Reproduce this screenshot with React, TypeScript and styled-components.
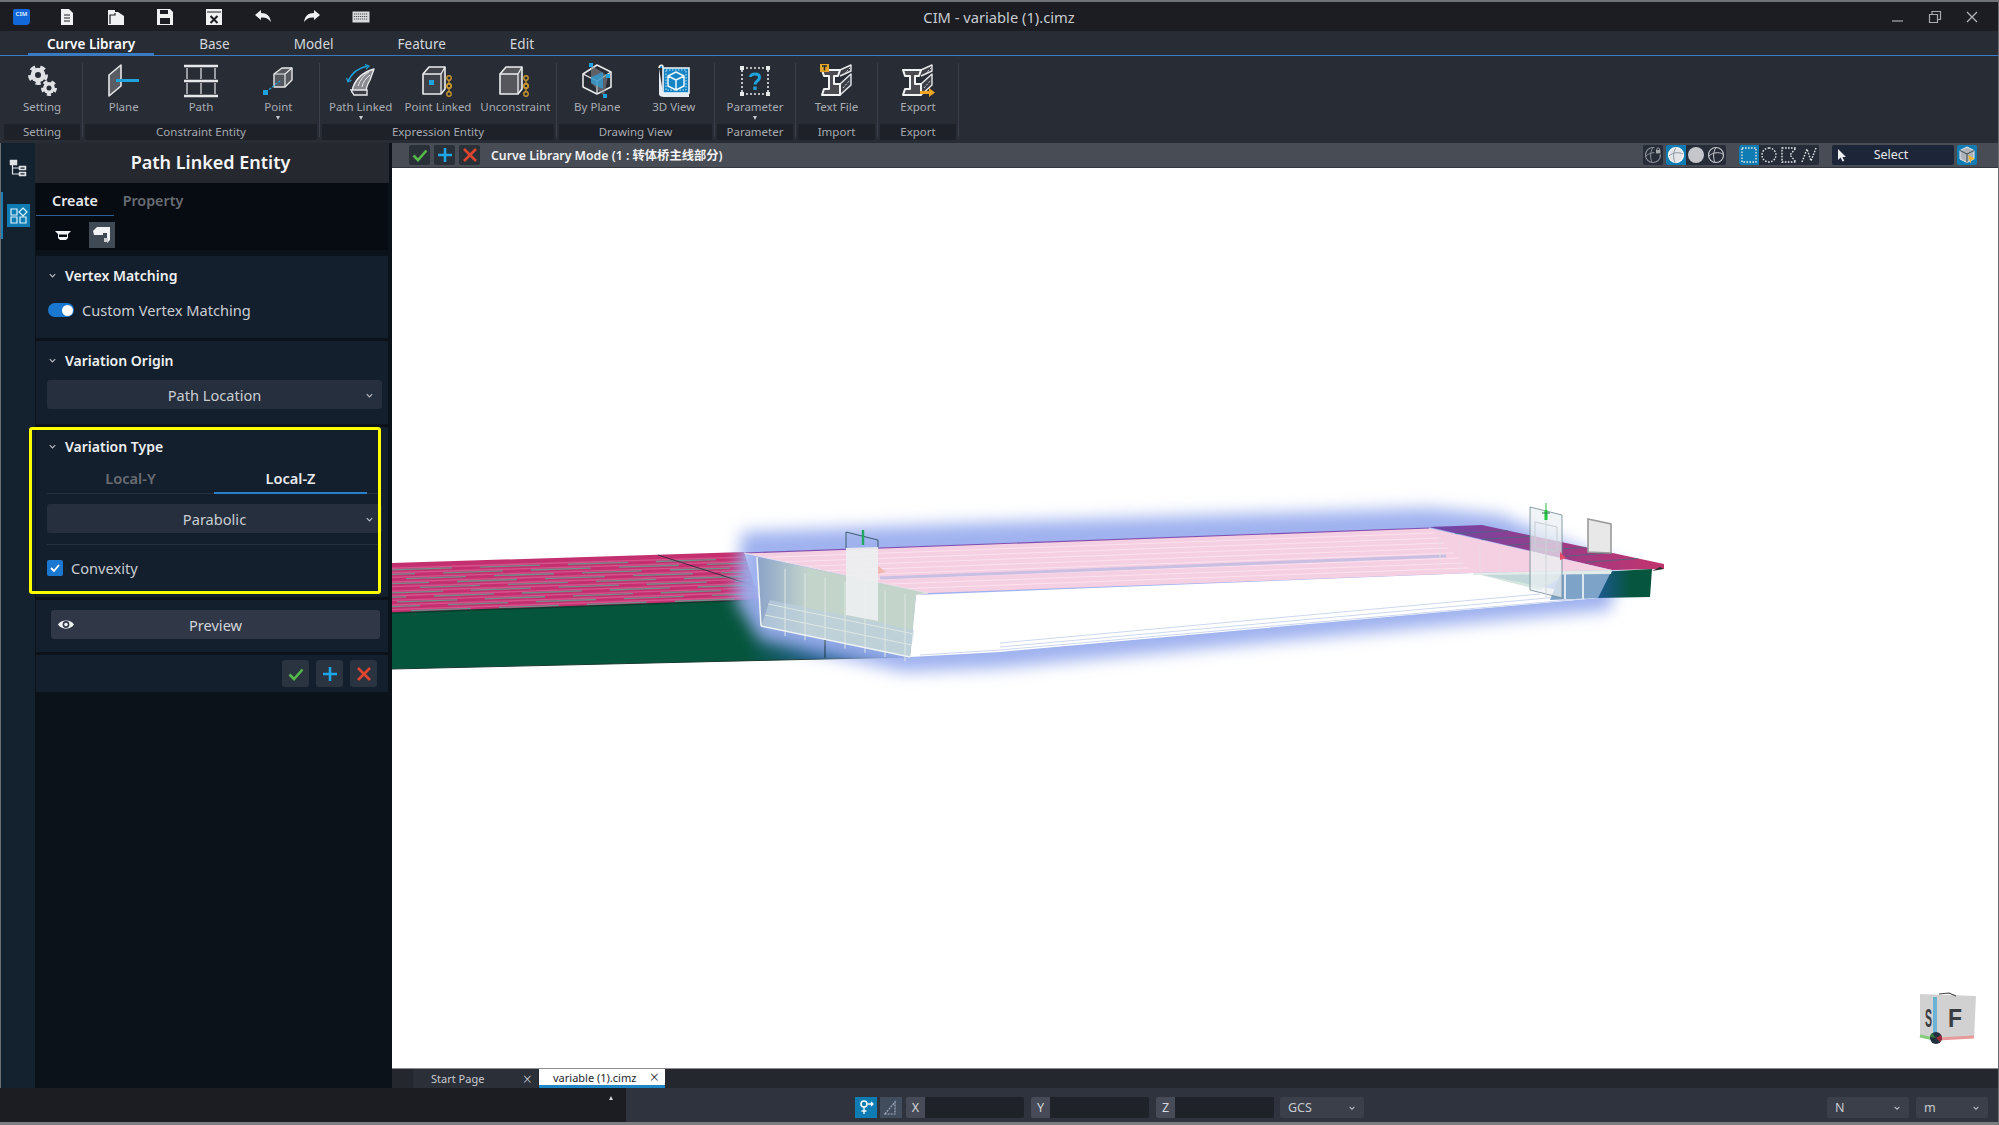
import React from "react";
import styled, { createGlobalStyle } from "styled-components";

const GlobalStyle = createGlobalStyle`
  html, body {
    margin: 0;
    padding: 0;
    background: #14202d;
  }
  body {
    font-family: "Noto Sans", "Noto Sans CJK SC", sans-serif;
  }
`;

const Frame = styled.div`
  width: 1999px;
  height: 1125px;
  box-sizing: border-box;
  overflow: hidden;
  display: flex;
  flex-direction: column;
  border-right: 1px solid #6a6d72;
  color: #fff;
`;

/* ---------- title bar ---------- */
const TitleBar = styled.div`
  height: 31px;
  box-sizing: border-box;
  border-top: 2px solid #6f7276;
  background: #1b1d22;
  display: grid;
  grid-template-columns: 1fr auto 1fr;
  align-items: center;
`;

const QuickBar = styled.div`
  display: flex;
  align-items: center;
  padding-left: 13px;
`;

const Logo = styled.div`
  width: 17px;
  height: 16px;
  margin-right: 12px;
  background: #1268d8;
  border-radius: 2px 2px 4px 2px;
  color: #cfe6ff;
  font-size: 6px;
  font-weight: 700;
  line-height: 10px;
  text-align: center;
`;

const QuickButton = styled.div`
  width: 49px;
  height: 20px;
  display: flex;
  align-items: center;
  justify-content: center;
`;

const WindowTitle = styled.div`
  font-size: 14.7px;
  color: #c9ccd1;
`;

const WindowButtons = styled.div`
  display: flex;
  justify-content: flex-end;
  gap: 23px;
  padding-right: 19px;
`;

/* ---------- menu + ribbon ---------- */
const MenuBar = styled.div`
  height: 25px;
  box-sizing: border-box;
  background: #282c35;
  border-bottom: 1px solid #3a7cc4;
  display: flex;
  padding-left: 28px;
  gap: 26px;
`;

const MenuTab = styled.div<{ $active?: boolean }>`
  height: 24px;
  line-height: 27px;
  box-sizing: border-box;
  padding: 0 19px;
  font-size: 13.5px;
  font-weight: ${(p) => (p.$active ? 600 : 400)};
  color: ${(p) => (p.$active ? "#ffffff" : "#d5d8dc")};
  border-bottom: ${(p) => (p.$active ? "2px solid #3a7cc4" : "none")};
`;

const Ribbon = styled.div`
  height: 87px;
  box-sizing: border-box;
  background: #282c35;
  display: flex;
  padding: 0 0 3px 4px;
`;

const RibbonGroup = styled.div<{ $width: number }>`
  width: ${(p) => p.$width}px;
  display: flex;
  flex-direction: column;
`;

const GroupItems = styled.div`
  height: 68px;
  display: flex;
`;

const GroupLabel = styled.div`
  height: 16px;
  background: #1e2127;
  color: #a6aab1;
  font-size: 11.5px;
  line-height: 16px;
  text-align: center;
`;

const GroupDivider = styled.div`
  width: 1px;
  height: 74px;
  margin: 7px 2px 0;
  background: #3b3f49;
`;

const RibbonItem = styled.div`
  flex: 1;
  min-width: 0;
  display: flex;
  flex-direction: column;
  align-items: center;
  padding-top: 7px;
`;

const ItemLabel = styled.div`
  font-size: 11.5px;
  line-height: 15px;
  color: #a9adb4;
  white-space: nowrap;
`;

const ItemCaret = styled.div`
  width: 0;
  height: 0;
  border-left: 2.5px solid transparent;
  border-right: 2.5px solid transparent;
  border-top: 4px solid #c8ccd0;
  margin-top: 2px;
`;

/* ---------- main area ---------- */
const Main = styled.div`
  flex: 1;
  min-height: 0;
  display: flex;
`;

const SideRail = styled.div`
  width: 35px;
  box-sizing: border-box;
  border-left: 1px solid #6a6d72;
  background: #14212e;
  position: relative;
  display: flex;
  flex-direction: column;
  align-items: center;
  padding-top: 13px;
  gap: 25px;
`;

const RailMarker = styled.div`
  position: absolute;
  left: 0;
  top: 49px;
  width: 2px;
  height: 47px;
  background: #1d7fb8;
`;

const RailButton = styled.div<{ $active?: boolean }>`
  width: 23px;
  height: 23px;
  display: flex;
  align-items: center;
  justify-content: center;
  background: ${(p) => (p.$active ? "#0f7cb3" : "transparent")};
`;

const Panel = styled.div`
  width: 357px;
  box-sizing: border-box;
  background: #0c1219;
  padding: 0 4px 0 1px;
  display: flex;
  flex-direction: column;
`;

const PanelTitle = styled.div`
  height: 40px;
  margin: 0 -1px;
  background: #25282f;
  font-size: 18px;
  font-weight: 600;
  line-height: 38px;
  text-align: center;
  color: #f4f5f6;
  padding-right: 3px;
`;

const CreateArea = styled.div`
  height: 67px;
  background: #060c12;
`;

const PanelTabs = styled.div`
  height: 33px;
  display: flex;
`;

const PanelTab = styled.div<{ $active?: boolean }>`
  width: 78px;
  height: 33px;
  box-sizing: border-box;
  font-size: 14.3px;
  font-weight: 600;
  line-height: 35px;
  text-align: center;
  color: ${(p) => (p.$active ? "#e8eaec" : "#696d73")};
  border-bottom: ${(p) => (p.$active ? "1.5px solid #2c5f93" : "none")};
`;

const ModeRow = styled.div`
  display: flex;
  align-items: center;
  gap: 13px;
  padding: 6px 0 0 14px;
`;

const ModeButton = styled.div<{ $active?: boolean }>`
  width: 26px;
  height: 26px;
  display: flex;
  align-items: center;
  justify-content: center;
  background: ${(p) => (p.$active ? "#3f4a55" : "transparent")};
`;

const Sections = styled.div`
  display: flex;
  flex-direction: column;
  gap: 3px;
  padding-top: 6px;
`;

const Section = styled.div<{ $height: number }>`
  position: relative;
  height: ${(p) => p.$height}px;
  box-sizing: border-box;
  background: #141f2d;
  padding: 0 6px 0 11px;
`;

const SectionHead = styled.div`
  height: 38px;
  display: flex;
  align-items: center;
  gap: 8px;
  padding-left: 1px;
  font-size: 14px;
  font-weight: 600;
  color: #eef0f2;
`;

const ToggleRow = styled.div`
  display: flex;
  align-items: center;
  gap: 8px;
  padding: 6px 0 0 1px;
  font-size: 14.6px;
  color: #c9cdd2;
`;

const Toggle = styled.div`
  width: 26px;
  height: 14px;
  border-radius: 7px;
  background: #1b78d0;
  display: flex;
  justify-content: flex-end;
  align-items: center;
  padding-right: 1px;
  box-sizing: border-box;
`;

const ToggleKnob = styled.div`
  width: 11px;
  height: 11px;
  border-radius: 50%;
  background: #fff;
`;

const Select = styled.div<{ $offset?: number }>`
  height: 29px;
  margin-top: ${(p) => p.$offset || 0}px;
  background: #262f3e;
  border-radius: 3px;
  display: flex;
  align-items: center;
  justify-content: center;
  position: relative;
  font-size: 14.6px;
  color: #c9cdd2;
`;

const SelectChevron = styled.svg`
  position: absolute;
  right: 8px;
  top: 11px;
`;

const TypeTabs = styled.div`
  height: 30px;
  margin-top: -1px;
  box-sizing: border-box;
  border-bottom: 1px solid #27303d;
  display: flex;
`;

const TypeTab = styled.div<{ $active?: boolean; $width: number }>`
  width: ${(p) => p.$width}px;
  height: 30px;
  box-sizing: border-box;
  font-size: 14.6px;
  font-weight: 600;
  line-height: 29px;
  text-align: center;
  color: ${(p) => (p.$active ? "#e8eaec" : "#696d73")};
  border-bottom: ${(p) => (p.$active ? "2px solid #2a7fc9" : "none")};
`;

const Rule = styled.div`
  height: 1px;
  margin-top: 11px;
  background: #27303d;
`;

const CheckRow = styled.div`
  display: flex;
  align-items: center;
  gap: 8px;
  margin-top: 13px;
  font-size: 14.6px;
  color: #c9cdd2;
`;

const CheckBox = styled.div`
  width: 16px;
  height: 16px;
  border-radius: 2px;
  background: #1b78d0;
  display: flex;
  align-items: center;
  justify-content: center;
`;

const Highlight = styled.div`
  position: absolute;
  left: -7px;
  top: 0;
  width: 352px;
  height: 167px;
  box-sizing: border-box;
  border: 3px solid #ffff00;
  border-radius: 3px;
  pointer-events: none;
`;

const PreviewButton = styled.div`
  margin: 10px 2px 0 4px;
  height: 29px;
  background: #303848;
  border-radius: 3px;
  display: flex;
  align-items: center;
  justify-content: center;
  position: relative;
  font-size: 14.6px;
  color: #d2d5d9;
`;

const EyeIcon = styled.svg`
  position: absolute;
  left: 6px;
  top: 7px;
`;

const ActionRow = styled.div`
  display: flex;
  justify-content: flex-end;
  gap: 7px;
  padding: 5px 5px 0 0;
`;

const ActionButton = styled.div`
  width: 27px;
  height: 27px;
  border-radius: 3px;
  background: #2a3340;
  display: flex;
  align-items: center;
  justify-content: center;
`;

/* ---------- viewport ---------- */
const ViewColumn = styled.div`
  flex: 1;
  min-width: 0;
  display: flex;
  flex-direction: column;
`;

const ViewToolbar = styled.div`
  height: 25px;
  background: #484d55;
  border-bottom: 1px solid #34373d;
  box-sizing: border-box;
  display: flex;
  align-items: center;
  padding: 0 21px 1px 17px;
`;

const ViewAction = styled.div`
  width: 21px;
  height: 20px;
  margin-right: 4px;
  border-radius: 2px;
  background: #2a3038;
  display: flex;
  align-items: center;
  justify-content: center;
`;

const ModeLabel = styled.div`
  margin-left: 7px;
  font-size: 12.3px;
  font-weight: 600;
  color: #f1f2f3;
  white-space: nowrap;
`;

const ToolGroup = styled.div<{ $gapLeft: number }>`
  display: flex;
  height: 20px;
  margin-left: ${(p) => p.$gapLeft}px;
  border-radius: 2px;
  background: #262c38;
  overflow: hidden;
`;

const ToolButton = styled.div<{ $active?: boolean }>`
  width: 20px;
  height: 20px;
  display: flex;
  align-items: center;
  justify-content: center;
  background: ${(p) => (p.$active ? "#0f7cb3" : "transparent")};
`;

const SelectMode = styled.div`
  width: 122px;
  height: 20px;
  margin-left: 13px;
  padding-right: 4px;
  box-sizing: border-box;
  border-radius: 2px;
  background: #1d2638;
  display: flex;
  align-items: center;
  position: relative;
  justify-content: center;
  font-size: 12.5px;
  color: #e6e8ea;
`;

const SelectCursor = styled.svg`
  position: absolute;
  left: 5px;
  top: 4px;
`;

const Spacer = styled.div`
  flex: 1;
`;

const Viewport = styled.div`
  flex: 1;
  min-height: 0;
  background: #ffffff;
`;

const SceneSvg = styled.svg`
  display: block;
  width: 100%;
  height: 100%;
`;

const DocTabs = styled.div`
  height: 20px;
  background: #25272e;
  border-top: 1px solid #8b8d91;
  box-sizing: border-box;
  display: flex;
  padding-left: 21px;
`;

const DocTab = styled.div<{ $active?: boolean; $width: number }>`
  width: ${(p) => p.$width}px;
  box-sizing: border-box;
  display: flex;
  align-items: center;
  justify-content: space-between;
  margin-left: ${(p) => (p.$active ? "1px" : "0")};
  padding: 0 6px 0 ${(p) => (p.$active ? "14px" : "18px")};
  font-size: 11px;
  background: ${(p) => (p.$active ? "#ffffff" : "#2b2f38")};
  color: ${(p) => (p.$active ? "#23262b" : "#c8cbd0")};
  border-bottom: ${(p) => (p.$active ? "3px solid #1d86c6" : "none")};
`;

const DocClose = styled.span`
  font-size: 16px;
  font-weight: 300;
  line-height: 16px;
`;

/* ---------- status bar ---------- */
const StatusBar = styled.div`
  height: 37px;
  box-sizing: border-box;
  border-bottom: 3px solid #7b7d80;
  background: #2f333d;
  display: flex;
`;

const StatusLeft = styled.div`
  width: 626px;
  background: #1b1d22;
  position: relative;
`;

const StatusCaret = styled.div`
  position: absolute;
  left: 609px;
  top: 8px;
  width: 0;
  height: 0;
  border-left: 2.5px solid transparent;
  border-right: 2.5px solid transparent;
  border-bottom: 4px solid #d5d7da;
`;

const StatusRight = styled.div`
  flex: 1;
  display: flex;
  align-items: flex-start;
  padding: 9px 10px 0 229px;
`;

const SnapButton = styled.div<{ $active?: boolean }>`
  width: 22px;
  height: 21px;
  margin-right: 3px;
  display: flex;
  align-items: center;
  justify-content: center;
  background: ${(p) => (p.$active ? "#0f7cb3" : "#414c5c")};
`;

const Coord = styled.div`
  width: 118px;
  height: 21px;
  margin-left: 1px;
  margin-right: 6px;
  display: flex;
  background: #1f2228;
  border-radius: 2px;
  overflow: hidden;
`;

const CoordLabel = styled.div`
  width: 19px;
  background: #464b57;
  color: #d4d7db;
  font-size: 12.5px;
  line-height: 21px;
  text-align: center;
`;

const StatusSelect = styled.div<{ $width: number; $gapLeft?: number }>`
  width: ${(p) => p.$width}px;
  height: 21px;
  margin-left: ${(p) => p.$gapLeft || 0}px;
  box-sizing: border-box;
  padding: 0 8px;
  border-radius: 2px;
  background: #3a3f4a;
  color: #c7cbd0;
  font-size: 12.5px;
  display: flex;
  align-items: center;
  justify-content: space-between;
`;

/* ---------- icons ---------- */
const Chevron = ({ size = 9 }: { size?: number }) => (
  <svg width={size} height={size} viewBox="0 0 10 10">
    <path d="M2 3.5 5 6.5 8 3.5" fill="none" stroke="#b9bdc3" strokeWidth="1.3" />
  </svg>
);

const Gear = ({ cx, cy, r, inner }: { cx: number; cy: number; r: number; inner: number }) => (
  <g>
    <circle cx={cx} cy={cy} r={r} fill="none" stroke="#dfe1e4" strokeWidth={r * 0.5} strokeDasharray={`${r * 0.62} ${r * 0.62}`} />
    <circle cx={cx} cy={cy} r={r * 0.92} fill="#dfe1e4" />
    <circle cx={cx} cy={cy} r={inner} fill="#282c35" />
  </g>
);

const IBeam = () => (
  <g>
    <path d="M21 7 32 2V8L21 13M21 21 32 11V22L21 32" fill="#3c3f47" stroke="#e8e9eb" strokeWidth="1.4" strokeLinejoin="round" />
    <path d="M25 11 31 5M24 25 31 17M24 18 31 12" stroke="#d6d8db" strokeWidth="1" strokeDasharray="2 1.5" />
    <path d="M3 7H21L19 13H15V21H21V32H3L5 26H10V13H5Z" fill="#4a4c52" stroke="#f2f3f4" strokeWidth="2" strokeLinejoin="round" />
  </g>
);

const ChainLink = ({ x }: { x: number }) => (
  <g fill="none" stroke="#c8962e" strokeWidth="1.4">
    <circle cx={x} cy="15" r="2.2" />
    <path d={`M${x} 17V21`} />
    <circle cx={x} cy="23" r="2.2" />
  </g>
);

const ribbonIcons: Record<string, React.ReactNode> = {
  setting: (
    <>
      <Gear cx={14} cy={12} r={8} inner={3} />
      <Gear cx={25} cy={25} r={6.4} inner={2.5} />
    </>
  ),
  plane: (
    <>
      <path d="M3 33V12L15 2V23Z" fill="#5a5c63" stroke="#e6e7e9" strokeWidth="1.6" strokeLinejoin="round" />
      <path d="M10 17.5H33" stroke="#1ea3dc" strokeWidth="3" />
    </>
  ),
  path: (
    <g stroke="#e6e7e9" fill="none">
      <path d="M1 3H35M1 18H35M1 33H35" strokeWidth="2.4" />
      <path d="M4 5V16M18 5V16M32 5V16M4 20V31M18 20V31M32 20V31" strokeWidth="1.2" />
    </g>
  ),
  point: (
    <>
      <path d="M14 11 22 5H32V17L25 24H14Z" fill="#55585f" stroke="#e8e9eb" strokeWidth="1.4" strokeLinejoin="round" />
      <path d="M14 11H25V24M25 11 32 5" fill="none" stroke="#e8e9eb" strokeWidth="1.2" />
      <path d="M6 29 20 18" stroke="#1ea3dc" strokeWidth="1.3" strokeDasharray="2.5 1.5" />
      <rect x="3" y="27" width="5" height="5" fill="#1ea3dc" />
    </>
  ),
  pathLinked: (
    <>
      <path d="M5 18C9 10 15 5 24 3" fill="none" stroke="#1ea3dc" strokeWidth="1.5" />
      <path d="M22 1.5 26 3 23 6M3.5 15 5 19 8.5 17" fill="none" stroke="#1ea3dc" strokeWidth="1.2" />
      <path d="M10 24C13 16 20 9 31 6L27 17C24 22 23 25 23 29H9Z" fill="#888a8f" stroke="#e8e9eb" strokeWidth="1.4" strokeLinejoin="round" />
      <path d="M15 23C17 17 21 12 26 9M19 24C20 19 23 15 27 12" fill="none" stroke="#e8e9eb" strokeWidth="1" />
      <path d="M8 27H24V32H11Z" fill="#3b3e45" stroke="#e8e9eb" strokeWidth="1.4" />
    </>
  ),
  pointLinked: (
    <>
      <path d="M3 11 9 4H25V26L21 31H3Z" fill="#3f4148" stroke="#ecedef" strokeWidth="1.6" strokeLinejoin="round" />
      <path d="M3 11H21V31M21 11 25 4" fill="none" stroke="#ecedef" strokeWidth="1.3" />
      <rect x="9" y="17" width="5" height="5" fill="#1ea3dc" />
      <ChainLink x={29} />
      <g transform="translate(0 8)"><ChainLink x={29} /></g>
    </>
  ),
  unconstraint: (
    <>
      <path d="M3 11 9 4H25V26L21 31H3Z" fill="#55575d" stroke="#ecedef" strokeWidth="1.6" strokeLinejoin="round" />
      <path d="M3 11H21V31M21 11 25 4" fill="none" stroke="#ecedef" strokeWidth="1.3" />
      <ChainLink x={29} />
      <g transform="translate(0 8)"><ChainLink x={29} /></g>
    </>
  ),
  byPlane: (
    <>
      <path d="M18 2 32 9V24L18 31 4 24V11Z" fill="none" stroke="#e8e9eb" strokeWidth="1.6" strokeLinejoin="round" />
      <path d="M4 11 18 18 32 9M18 18V31" fill="none" stroke="#e8e9eb" strokeWidth="1.3" />
      <path d="M12 2 29 13 25 33 12 20Z" fill="#8b8c8c" fillOpacity=".55" />
      <path d="M12 14 24 9V26L12 20Z" fill="#2f9ed6" fillOpacity=".75" />
      <g fill="#1ea3dc">
        <rect x="10" y="0" width="4" height="4" />
        <rect x="27" y="11" width="4" height="4" />
        <rect x="24" y="31" width="4" height="4" />
      </g>
    </>
  ),
  view3d: (
    <>
      <path d="M3 5C3 2 7 1 7 4V30H33V5H7" fill="#1484c4" stroke="#f2f6f9" strokeWidth="1.6" />
      <path d="M3 5V31C3 33 5 34 8 34H33V30H7" fill="#e6eef4" />
      <rect x="10" y="7" width="20" height="20" fill="none" stroke="#bfe3f6" strokeWidth="1" strokeDasharray="1.5 1.5" />
      <path d="M20 9 28 13V23L20 27 12 23V13ZM12 13 20 17 28 13M20 17V27" fill="none" stroke="#e8f6fd" strokeWidth="1.5" strokeLinejoin="round" />
    </>
  ),
  parameter: (
    <>
      <rect x="5" y="5" width="26" height="26" fill="none" stroke="#e8e9eb" strokeWidth="1.6" strokeDasharray="2 2" />
      <g fill="#e8e9eb">
        <rect x="3" y="3" width="4" height="4" />
        <rect x="29" y="3" width="4" height="4" />
        <rect x="3" y="29" width="4" height="4" />
        <rect x="29" y="29" width="4" height="4" />
      </g>
      <path d="M13.5 14C13.5 10 22.5 10 22.5 14.5 22.5 18 18 18 18 21.5" fill="none" stroke="#1ea3dc" strokeWidth="3" />
      <rect x="16.3" y="23.5" width="3.4" height="3.4" fill="#1ea3dc" />
    </>
  ),
  textFile: (
    <>
      <IBeam />
      <rect x="1" y="1" width="9" height="8" fill="#e3a62a" />
      <path d="M3 3H8M5.5 3V7.5" stroke="#26282e" strokeWidth="1.5" />
    </>
  ),
  exportFile: (
    <>
      <IBeam />
      <path d="M20 28H29V25L35 29.5 29 34V31H20Z" fill="#f0a623" />
    </>
  ),
};

const QuickIcon = ({ name }: { name: string }) => {
  const fill = "#f0f1f2";
  switch (name) {
    case "new":
      return (
        <svg width="18" height="18" viewBox="0 0 18 18">
          <path d="M3 1H11L15 5V17H3Z" fill={fill} />
          <path d="M6 7H12M6 10H12M6 13H12" stroke="#1b1d22" strokeWidth="1.2" />
        </svg>
      );
    case "open":
      return (
        <svg width="18" height="18" viewBox="0 0 18 18">
          <path d="M1 2H8V4H11L17 8V17H1Z" fill={fill} />
          <path d="M3 16 3 7H8V5" fill="none" stroke="#1b1d22" strokeWidth="1.2" />
        </svg>
      );
    case "save":
      return (
        <svg width="18" height="18" viewBox="0 0 18 18">
          <path d="M1 1H14L17 4V17H1Z" fill={fill} />
          <path d="M4 2H12V6H4ZM4 10H14V16H4Z" fill="#1b1d22" />
        </svg>
      );
    case "close":
      return (
        <svg width="18" height="18" viewBox="0 0 18 18">
          <path d="M1 1H17V17H1Z" fill={fill} />
          <path d="M2 4H16" stroke="#1b1d22" strokeWidth="1" />
          <path d="M5.5 8 12.5 15M12.5 8 5.5 15" stroke="#1b1d22" strokeWidth="2" />
        </svg>
      );
    case "undo":
      return (
        <svg width="18" height="18" viewBox="0 0 18 18">
          <path d="M1 7 7 2V5C13 5 16 8 17 14 14 10 11 9 7 9.5V12Z" fill={fill} />
        </svg>
      );
    case "redo":
      return (
        <svg width="18" height="18" viewBox="0 0 18 18">
          <path d="M17 7 11 2V5C5 5 2 8 1 14 4 10 7 9 11 9.5V12Z" fill={fill} />
        </svg>
      );
    default:
      return (
        <svg width="18" height="14" viewBox="0 0 18 14">
          <rect x="0.5" y="1.5" width="17" height="11" fill="#d8dadc" />
          <path d="M2 4H16M2 6.5H16M2 9H16" stroke="#4a4c52" strokeWidth="1" strokeDasharray="1.2 .8" />
        </svg>
      );
  }
};

const OkIcon = () => (
  <svg width="16" height="16" viewBox="0 0 16 16">
    <path d="M1.5 8.5 6 13 14.5 3.5" fill="none" stroke="#54b948" strokeWidth="2.6" />
  </svg>
);
const AddIcon = () => (
  <svg width="16" height="16" viewBox="0 0 16 16">
    <path d="M8 1V15M1 8H15" stroke="#1ea7e8" strokeWidth="2.6" />
  </svg>
);
const CancelIcon = () => (
  <svg width="16" height="16" viewBox="0 0 16 16">
    <path d="M2 2 14 14M14 2 2 14" stroke="#e0452f" strokeWidth="2.6" />
  </svg>
);

const Globe = ({ stroke, fill = "none", lines, lock }: { stroke: string; fill?: string; lines?: string; lock?: boolean }) => (
  <svg width="18" height="18" viewBox="0 0 18 18">
    <circle cx="9" cy="9" r="7.5" fill={fill} stroke={stroke} strokeWidth="1.2" />
    <path d="M2 10C6 6 12 6 16 8M9 1.5C6 6 6 12 8 16.5" fill="none" stroke={lines || stroke} strokeWidth="1" />
    {lock && (
      <>
        <rect x="10.5" y="1" width="7" height="7.5" fill="#262c38" />
        <rect x="12" y="4" width="4.4" height="3.4" fill="#a5a8ad" />
        <path d="M12.8 4V3C12.8 1.6 15.6 1.6 15.6 3V4" fill="none" stroke="#a5a8ad" strokeWidth=".9" />
      </>
    )}
  </svg>
);

const SelectShape = ({ d }: { d: string }) => (
  <svg width="18" height="18" viewBox="0 0 18 18">
    <path d={d} fill="none" stroke="#e4e6e8" strokeWidth="1.4" strokeDasharray="1.6 1.4" />
  </svg>
);

/* ---------- 3d scene, page coordinates ---------- */
const lerp = (a: number, b: number, t: number) => a + (b - a) * t;

const deckLines = Array.from({ length: 10 }, (_, i) => {
  const t = (i + 0.7) / 10;
  return {
    y1: lerp(565, 611, t),
    y2: lerp(554, 598, t),
    x2: lerp(744, 759, t),
  };
});

const endLines = Array.from({ length: 6 }, (_, i) => {
  const t = (i + 1) / 7;
  return {
    x1: lerp(1429, 1612, t),
    y1: lerp(528, 568, t),
    x2: lerp(1482, 1664, t),
    y2: lerp(525, 564, t),
  };
});

const pinkLines = Array.from({ length: 8 }, (_, i) => {
  const t = (i + 1) / 9;
  return {
    y1: lerp(553, 593, t),
    x1: lerp(744, 928, t),
    x2: lerp(1429, 1473, t),
    y2: lerp(528, 573, t),
  };
});

const boxColumns = [785, 805, 825, 845, 865, 885, 905];
const endColumns = [1465, 1485, 1505, 1525];

const Scene = () => (
  <SceneSvg viewBox="392 168 1606 900" preserveAspectRatio="none">
    <defs>
      <filter id="glow" x="-10%" y="-30%" width="120%" height="160%">
        <feGaussianBlur stdDeviation="8" />
      </filter>
      <linearGradient id="wall" x1="0" x2="1" y1="0" y2="0">
        <stop offset="0.68" stopColor="#05553c" />
        <stop offset="0.82" stopColor="#1a5a86" />
        <stop offset="1" stopColor="#1d5a8e" />
      </linearGradient>
      <linearGradient id="endWall" x1="0" x2="1" y1="0" y2="0">
        <stop offset="0" stopColor="#1c5a90" />
        <stop offset="0.6" stopColor="#06553f" />
      </linearGradient>
      <linearGradient id="endDeck" x1="0" x2="1" y1="0" y2="0">
        <stop offset="0" stopColor="#6d46a8" />
        <stop offset="1" stopColor="#c2336c" />
      </linearGradient>
      <linearGradient id="fadeBox" x1="0" x2="1" y1="0" y2="0">
        <stop offset="0" stopColor="#8ba3c9" />
        <stop offset="0.3" stopColor="#c3d4cb" />
      </linearGradient>
    </defs>

    <path d="M392 563 744 552 759 600 392 613Z" fill="#c4306f" />
    {deckLines.map((l, i) => (
      <g key={i}>
        <line x1={392} y1={l.y1} x2={l.x2} y2={l.y2} stroke="#d6528c" strokeWidth="1.4" />
        <line x1={392} y1={l.y1 + 1.6} x2={l.x2} y2={l.y2 + 1.6} stroke="#70908b" strokeWidth="1.3" strokeDasharray="60 28" strokeDashoffset={i * 37} />
      </g>
    ))}
    <path d="M658 555 752 585" stroke="#3c3040" strokeWidth="1" />
    <path d="M392 613 759 600 761 626 910 657 392 669Z" fill="url(#wall)" />
    <path d="M392 613 759 600" stroke="#0a3d2d" strokeWidth="1.5" />
    <path d="M392 669 910 657" stroke="#183a30" strokeWidth="1" />

    <path
      d="M742 532 1000 522 1429 508 1500 515 1620 565 1610 610 1000 668 905 672 760 640 735 600Z"
      fill="#9aaeee"
      fillOpacity="0.95"
      filter="url(#glow)"
    />

    <path d="M1429 527 1482 525 1664 564 1664 569 1612 570Z" fill="url(#endDeck)" />
    {endLines.map((l, i) => (
      <line key={i} x1={l.x1} y1={l.y1} x2={l.x2} y2={l.y2} stroke="#3c6f7c" strokeWidth="1" strokeOpacity=".7" />
    ))}
    <path d="M1598 572 1652 569 1650 597 1598 598Z" fill="url(#endWall)" />
    <path d="M1660 567 1664 569 1652 571Z" fill="#26302c" />

    <path d="M916 595 1473 573 1598 598 1000 652 910 657Z" fill="#ffffff" />
    <path d="M920 655 1000 650 1592 598M1000 647 1570 596M1000 643 1540 594" fill="none" stroke="#cdd8ef" strokeWidth="1" />

    <path d="M744 553 1429 528 1612 570 1473 573 928 593Z" fill="#f5cfe2" />
    {pinkLines.map((l, i) => (
      <line key={i} x1={l.x1} y1={l.y1} x2={l.x2} y2={l.y2} stroke="#fbe3ee" strokeWidth="1" />
    ))}
    <path d="M880 578 1446 556" stroke="#c9bfe3" strokeWidth="3" />
    <path d="M744 553 1429 528" stroke="#8050b0" strokeWidth="1.2" />

    <path d="M757 557 928 593 916 595 910 657 761 626Z" fill="url(#fadeBox)" />
    <path d="M761 626 910 657 914 630 770 600Z" fill="#bcd0de" fillOpacity=".65" />
    {boxColumns.map((x) => (
      <line key={x} x1={x} y1={563 + (x - 757) * 0.21} x2={x} y2={631 + (x - 761) * 0.21} stroke="#dde7e3" strokeWidth="1" />
    ))}
    <path d="M765 615 912 645M768 604 914 634" stroke="#dde7e3" strokeWidth="1" />
    <path d="M761 626 910 657" stroke="#eef3f4" strokeWidth="1.5" />
    <path d="M757 557 761 626" stroke="#eef3f4" strokeWidth="1.5" />
    <path d="M744 553 928 593 916 595" fill="none" stroke="#eadfe6" strokeWidth="1" />
    <path d="M825 640V658" stroke="#1a3a44" strokeWidth="1" />

    <path d="M846 532 878 540V621L846 615Z" fill="#9fb0ea" fillOpacity=".35" />
    <path d="M846 548 878 547V621L846 615Z" fill="#f0f2f0" fillOpacity=".88" />
    <path d="M846 532 878 540" stroke="#3a5a70" strokeWidth="1" />
    <path d="M846 532V548M878 540V547" stroke="#3a5a70" strokeWidth="1" />
    <path d="M863 530V545" stroke="#1fa763" strokeWidth="2.4" />
    <path d="M878 566 886 572 878 574Z" fill="#f1b7b0" />

    <path d="M1473 573 1565 575 1540 590Z" fill="#c9e0d4" fillOpacity=".8" />
    <path d="M1560 575 1612 570 1598 598 1550 600Z" fill="#7ea3c9" />
    {endColumns.map((x) => (
      <line key={x} x1={x - 25} y1={532 + (x - 1440) * 0.21} x2={x - 25} y2={568 + (x - 1440) * 0.05} stroke="#e6dde2" strokeWidth="1" />
    ))}
    {[1565, 1583].map((x) => (
      <line key={x} x1={x} y1={573} x2={x} y2={599} stroke="#dde8ee" strokeWidth="2" />
    ))}
    <path d="M1473 573 1612 570 1611 574 1473 575Z" fill="#e2ebe8" />

    <path d="M1530 507 1562 515V598L1530 590Z" fill="#eaf0f2" fillOpacity=".72" stroke="#6b8792" strokeWidth="0.8" />
    <path d="M1535 522 1557 527V552L1535 548Z" fill="none" stroke="#c7cdd3" strokeWidth="1" />
    <path d="M1546 503V520" stroke="#27b84a" strokeWidth="1" />
    <path d="M1546 510V520" stroke="#1ec93c" strokeWidth="3" />
    <path d="M1542 513H1550" stroke="#2a7a50" strokeWidth="1" />
    <path d="M1546 520V598" stroke="#cdd6da" strokeWidth="1" />
    <path d="M1560 552 1566 558 1560 560Z" fill="#e84a6a" />

    <path d="M1588 519 1611 524V553L1588 552Z" fill="#e8e8e8" stroke="#9a9a9a" strokeWidth="1.6" />

    <g>
      <path d="M1920 994 1976 996 1974 1038 1920 1037Z" fill="#d1d1d1" />
      <path d="M1939 994 1949 993 1956 996" fill="none" stroke="#444" strokeWidth="1.2" />
      <text x="1925" y="1027" fontFamily="'Liberation Sans', sans-serif" fontSize="26" fontWeight="700" fill="#3a3d42" textLength="7" lengthAdjust="spacingAndGlyphs">S</text>
      <text x="1948" y="1027" fontFamily="'Liberation Sans', sans-serif" fontSize="26" fontWeight="700" fill="#3a3d42" textLength="14" lengthAdjust="spacingAndGlyphs">F</text>
      <path d="M1935 997V1036" stroke="#6bb2d4" strokeWidth="4" />
      <path d="M1920 1036 1934 1039" stroke="#86cc7c" strokeWidth="3" />
      <path d="M1938 1039 1974 1037" stroke="#e89a9a" strokeWidth="3" />
      <circle cx="1936" cy="1038" r="6" fill="#20303e" />
      <path d="M1936 1038 1941 1035A6 6 0 0 1 1940 1042Z" fill="#9a2f3a" />
      <path d="M1936 1038 1930 1037A6 6 0 0 1 1932 1033Z" fill="#2f7a3a" />
    </g>
  </SceneSvg>
);

/* ---------- data ---------- */
const ribbon = [
  { label: "Setting", width: 76, items: [{ icon: "setting", text: "Setting" }] },
  {
    label: "Constraint Entity",
    width: 232,
    items: [
      { icon: "plane", text: "Plane" },
      { icon: "path", text: "Path" },
      { icon: "point", text: "Point", caret: true },
    ],
  },
  {
    label: "Expression Entity",
    width: 232,
    items: [
      { icon: "pathLinked", text: "Path Linked", caret: true },
      { icon: "pointLinked", text: "Point Linked" },
      { icon: "unconstraint", text: "Unconstraint" },
    ],
  },
  {
    label: "Drawing View",
    width: 153,
    items: [
      { icon: "byPlane", text: "By Plane" },
      { icon: "view3d", text: "3D View" },
    ],
  },
  { label: "Parameter", width: 76, items: [{ icon: "parameter", text: "Parameter", caret: true }] },
  { label: "Import", width: 77, items: [{ icon: "textFile", text: "Text File" }] },
  { label: "Export", width: 76, items: [{ icon: "exportFile", text: "Export" }] },
];

const SectionTitle = ({ children }: { children: React.ReactNode }) => (
  <SectionHead>
    <Chevron />
    {children}
  </SectionHead>
);

const SelectBox = ({ children, offset }: { children: React.ReactNode; offset?: number }) => (
  <Select $offset={offset}>
    {children}
    <SelectChevron width="9" height="9" viewBox="0 0 10 10">
      <path d="M2 3.5 5 6.5 8 3.5" fill="none" stroke="#b9bdc3" strokeWidth="1.3" />
    </SelectChevron>
  </Select>
);

export default function App() {
  return (
    <Frame>
      <GlobalStyle />
      <TitleBar>
        <QuickBar>
          <Logo>CIM</Logo>
          {["new", "open", "save", "close", "undo", "redo", "keys"].map((n) => (
            <QuickButton key={n}>
              <QuickIcon name={n} />
            </QuickButton>
          ))}
        </QuickBar>
        <WindowTitle>CIM - variable (1).cimz</WindowTitle>
        <WindowButtons>
          <svg width="14" height="14" viewBox="0 0 14 14">
            <path d="M1 11H12" stroke="#a7aaaf" strokeWidth="1.2" />
          </svg>
          <svg width="14" height="14" viewBox="0 0 14 14">
            <path d="M1.5 4.5H9.5V12.5H1.5ZM4 4.5V1.5H12.5V9.5H9.5" fill="none" stroke="#a7aaaf" strokeWidth="1.2" />
          </svg>
          <svg width="14" height="14" viewBox="0 0 14 14">
            <path d="M2 2 12 12M12 2 2 12" stroke="#b5b8bd" strokeWidth="1.2" />
          </svg>
        </WindowButtons>
      </TitleBar>

      <MenuBar>
        <MenuTab $active>Curve Library</MenuTab>
        <MenuTab>Base</MenuTab>
        <MenuTab>Model</MenuTab>
        <MenuTab>Feature</MenuTab>
        <MenuTab>Edit</MenuTab>
      </MenuBar>

      <Ribbon>
        {ribbon.map((group) => (
          <React.Fragment key={group.label}>
            <RibbonGroup $width={group.width}>
              <GroupItems>
                {group.items.map((item) => (
                  <RibbonItem key={item.text}>
                    <svg width="36" height="36" viewBox="0 0 36 36">
                      {ribbonIcons[item.icon]}
                    </svg>
                    <ItemLabel>{item.text}</ItemLabel>
                    {"caret" in item && item.caret && <ItemCaret />}
                  </RibbonItem>
                ))}
              </GroupItems>
              <GroupLabel>{group.label}</GroupLabel>
            </RibbonGroup>
            <GroupDivider />
          </React.Fragment>
        ))}
      </Ribbon>

      <Main>
        <SideRail>
          <RailMarker />
          <RailButton>
            <svg width="20" height="20" viewBox="0 0 20 20">
              <path d="M2 2H9V7H2ZM11 8H18V12H11ZM11 14H18V18H11Z" fill="#dfe2e5" stroke="#dfe2e5" strokeWidth="0.5" />
              <path d="M4.5 7V16H11M4.5 10H11" fill="none" stroke="#dfe2e5" strokeWidth="1.2" />
              <path d="M12.5 9.5H16.5V10.8H12.5ZM12.5 15.3H16.5V16.6H12.5Z" fill="#14212e" />
            </svg>
          </RailButton>
          <RailButton $active>
            <svg width="19" height="19" viewBox="0 0 19 19">
              <path d="M2 3H8V9H2ZM2 11H8V17H2ZM11 11H17V17H11ZM14 2 18 6 14 10 10 6Z" fill="none" stroke="#dff3fc" strokeWidth="1.2" />
            </svg>
          </RailButton>
        </SideRail>

        <Panel>
          <PanelTitle>Path Linked Entity</PanelTitle>
          <CreateArea>
            <PanelTabs>
              <PanelTab $active>Create</PanelTab>
              <PanelTab>Property</PanelTab>
            </PanelTabs>
            <ModeRow>
              <ModeButton>
                <svg width="18" height="12" viewBox="0 0 18 12">
                  <path d="M1 2H17L14 5V9L12 11H6L4 9V5Z" fill="#f2f3f4" />
                  <path d="M5 5.5H13V8H5Z" fill="#060c12" />
                </svg>
              </ModeButton>
              <ModeButton $active>
                <svg width="20" height="20" viewBox="0 0 20 20">
                  <path d="M1 6 5 2H18V15L15 18V8H11V10H2Z" fill="#f2f3f4" />
                  <path d="M12 13H16V17H12Z" fill="#c9cdd2" />
                </svg>
              </ModeButton>
            </ModeRow>
          </CreateArea>

          <Sections>
            <Section $height={82}>
              <SectionTitle>Vertex Matching</SectionTitle>
              <ToggleRow>
                <Toggle>
                  <ToggleKnob />
                </Toggle>
                Custom Vertex Matching
              </ToggleRow>
            </Section>

            <Section $height={83}>
              <SectionTitle>Variation Origin</SectionTitle>
              <SelectBox offset={1}>Path Location</SelectBox>
            </Section>

            <Section $height={170}>
              <SectionTitle>Variation Type</SectionTitle>
              <TypeTabs>
                <TypeTab $width={167}>Local-Y</TypeTab>
                <TypeTab $active $width={153}>Local-Z</TypeTab>
              </TypeTabs>
              <SelectBox offset={10}>Parabolic</SelectBox>
              <Rule />
              <CheckRow>
                <CheckBox>
                  <svg width="12" height="12" viewBox="0 0 12 12">
                    <path d="M2 6 5 9 10 3" fill="none" stroke="#fff" strokeWidth="1.8" />
                  </svg>
                </CheckBox>
                Convexity
              </CheckRow>
              <Highlight />
            </Section>

            <Section $height={52}>
              <PreviewButton>
                <EyeIcon width="18" height="15" viewBox="0 0 18 15">
                  <path d="M1 7.5C4 2 14 2 17 7.5 14 13 4 13 1 7.5Z" fill="#f0f1f2" />
                  <circle cx="9" cy="7.5" r="3.4" fill="#303848" />
                  <circle cx="9" cy="7.5" r="1.8" fill="#f0f1f2" />
                </EyeIcon>
                Preview
              </PreviewButton>
            </Section>

            <Section $height={37}>
              <ActionRow>
                <ActionButton>
                  <OkIcon />
                </ActionButton>
                <ActionButton>
                  <AddIcon />
                </ActionButton>
                <ActionButton>
                  <CancelIcon />
                </ActionButton>
              </ActionRow>
            </Section>
          </Sections>
        </Panel>

        <ViewColumn>
          <ViewToolbar>
            <ViewAction>
              <OkIcon />
            </ViewAction>
            <ViewAction>
              <AddIcon />
            </ViewAction>
            <ViewAction>
              <CancelIcon />
            </ViewAction>
            <ModeLabel>Curve Library Mode (1 : 转体桥主线部分)</ModeLabel>
            <Spacer />
            <ToolGroup $gapLeft={0}>
              <ToolButton>
                <Globe stroke="#8d9197" lock />
              </ToolButton>
            </ToolGroup>
            <ToolGroup $gapLeft={3}>
              <ToolButton $active>
                <Globe stroke="#ffffff" fill="#e3e5e8" lines="#8f979f" />
              </ToolButton>
              <ToolButton>
                <svg width="18" height="18" viewBox="0 0 18 18">
                  <circle cx="9" cy="9" r="8" fill="#c4c6ca" />
                </svg>
              </ToolButton>
              <ToolButton>
                <Globe stroke="#c4c6ca" />
              </ToolButton>
            </ToolGroup>
            <ToolGroup $gapLeft={13}>
              <ToolButton $active>
                <SelectShape d="M2 2H16V16H2Z" />
              </ToolButton>
              <ToolButton>
                <SelectShape d="M9 2A7 7 0 1 1 8.9 2Z" />
              </ToolButton>
              <ToolButton>
                <SelectShape d="M2 2H16L10 9 16 16H2Z" />
              </ToolButton>
              <ToolButton>
                <SelectShape d="M2 16 7 3 11 15 16 2" />
              </ToolButton>
            </ToolGroup>
            <SelectMode>
              <SelectCursor width="10" height="13" viewBox="0 0 10 13">
                <path d="M1 0V11L3.6 8.6 5.5 12.5 7.3 11.7 5.4 8H9Z" fill="#eceef0" />
              </SelectCursor>
              Select
            </SelectMode>
            <ToolGroup $gapLeft={3}>
              <ToolButton $active>
                <svg width="18" height="18" viewBox="0 0 18 18">
                  <path d="M9 1 16 4.5V13L9 16.5 2 13V4.5Z" fill="#aeb4ba" stroke="#e8eaec" strokeWidth="1" />
                  <path d="M2 4.5 9 8 16 4.5M9 8V16.5" fill="none" stroke="#3d4650" strokeWidth="1" />
                  <path d="M10 9 17 13 13.5 14 12.5 17.5Z" fill="#f0b429" />
                </svg>
              </ToolButton>
            </ToolGroup>
          </ViewToolbar>
          <Viewport>
            <Scene />
          </Viewport>
          <DocTabs>
            <DocTab $width={125}>
              Start Page
              <DocClose>×</DocClose>
            </DocTab>
            <DocTab $active $width={126}>
              variable (1).cimz
              <DocClose>×</DocClose>
            </DocTab>
          </DocTabs>
        </ViewColumn>
      </Main>

      <StatusBar>
        <StatusLeft>
          <StatusCaret />
        </StatusLeft>
        <StatusRight>
          <SnapButton $active>
            <svg width="16" height="18" viewBox="0 0 16 18">
              <circle cx="6" cy="5" r="3" fill="none" stroke="#fff" strokeWidth="1.6" />
              <path d="M6 8V15M3.5 12H8.5M10 5H15M13 3 15 5 13 7" fill="none" stroke="#fff" strokeWidth="1.3" />
            </svg>
          </SnapButton>
          <SnapButton>
            <svg width="16" height="16" viewBox="0 0 16 16">
              <path d="M2 14 12 2V14Z" fill="none" stroke="#9fb1c7" strokeWidth="1.2" strokeDasharray="2 1" />
            </svg>
          </SnapButton>
          <Coord>
            <CoordLabel>X</CoordLabel>
          </Coord>
          <Coord>
            <CoordLabel>Y</CoordLabel>
          </Coord>
          <Coord>
            <CoordLabel>Z</CoordLabel>
          </Coord>
          <StatusSelect $width={84}>
            GCS
            <Chevron size={8} />
          </StatusSelect>
          <Spacer />
          <StatusSelect $width={82}>
            N
            <Chevron size={8} />
          </StatusSelect>
          <StatusSelect $width={72} $gapLeft={7}>
            m
            <Chevron size={8} />
          </StatusSelect>
        </StatusRight>
      </StatusBar>
    </Frame>
  );
}
